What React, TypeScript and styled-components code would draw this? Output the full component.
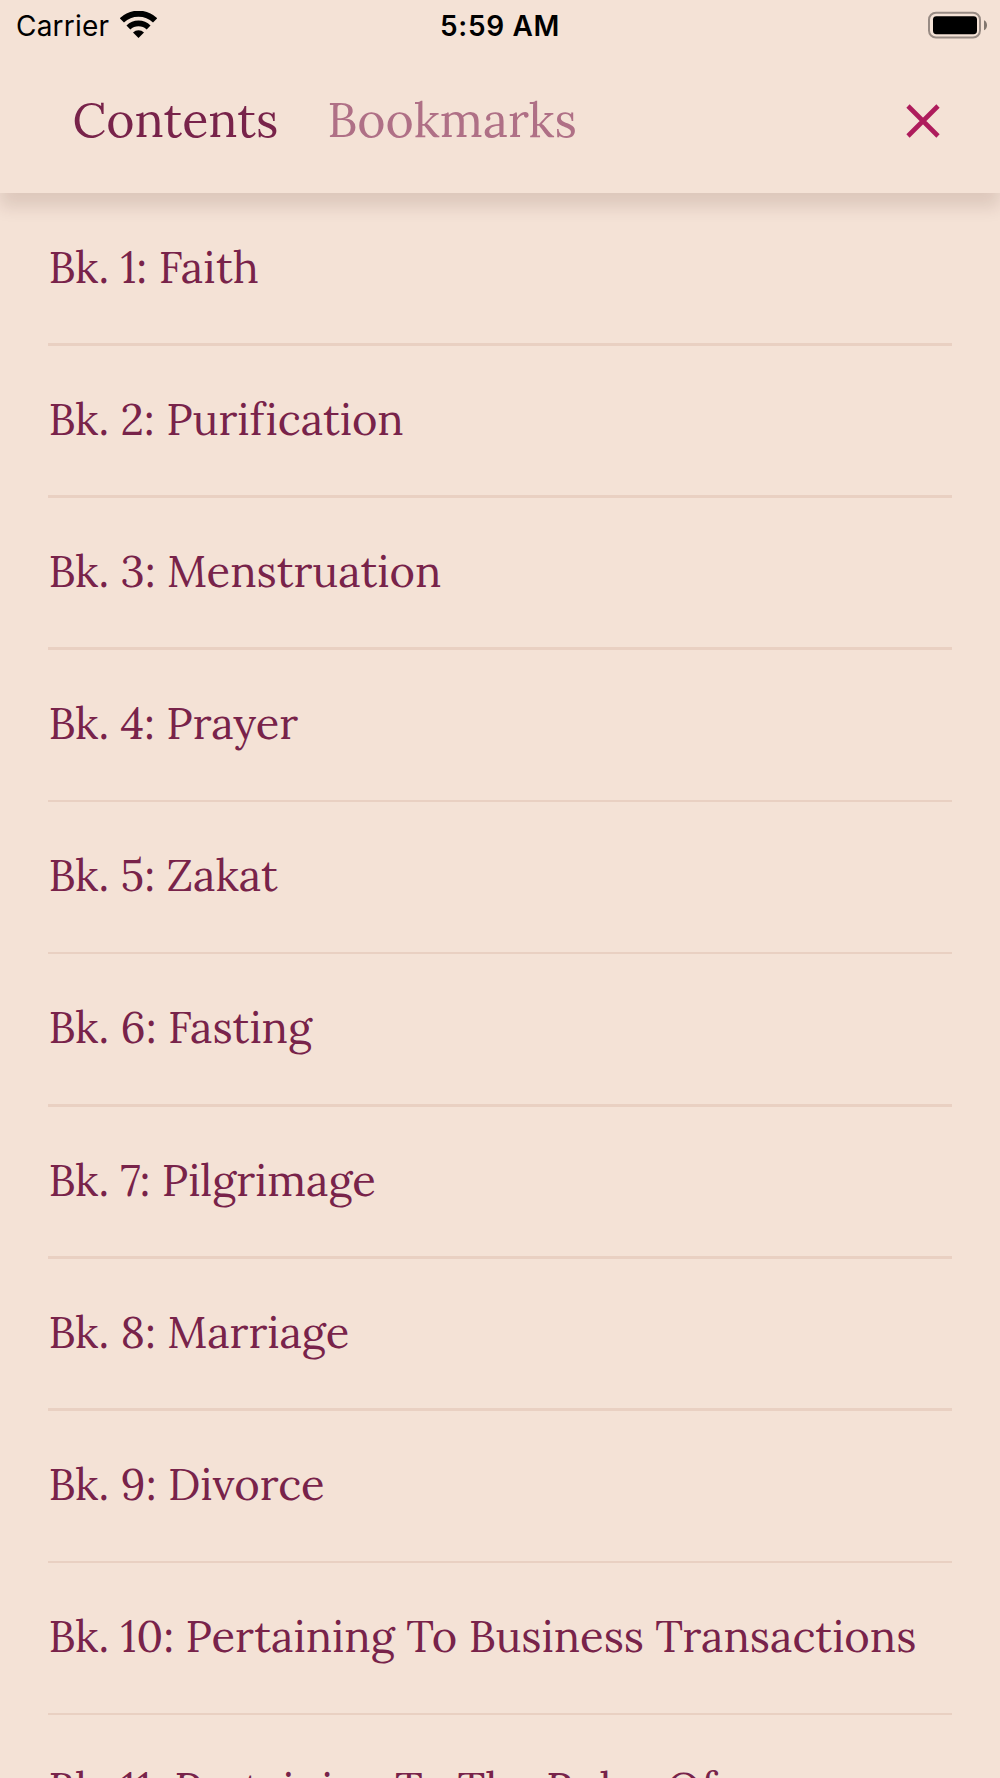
import React from "react";
import styled, { createGlobalStyle } from "styled-components";

const color = {
  paper: "#f4e2d6",
  ink: "#78234a",
  faded: "#af7086",
  accent: "#ae1c5c",
  rule: "#e9d0c2",
};

const GlobalStyle = createGlobalStyle`
  body {
    margin: 0;
    background: ${color.paper};
    overflow: hidden;
  }
`;

const Screen = styled.div`
  display: flex;
  flex-direction: column;
  width: 1000px;
  height: 1778px;
  overflow: hidden;
  background: ${color.paper};
  color: ${color.ink};
  font-family: Lora, "Liberation Serif", serif;
`;

const Header = styled.header`
  position: relative;
  z-index: 1;
  flex: none;
  height: 193px;
  background: ${color.paper};
  box-shadow: 0 14px 16px rgba(60, 20, 10, 0.12);
`;

const StatusBar = styled.div`
  display: grid;
  grid-template-columns: 1fr auto 1fr;
  align-items: center;
  height: 48px;
  padding: 0 13px 0 16px;
  color: #000;
  font: 400 28px/48px Inter, sans-serif;
`;

const Carrier = styled.div`
  display: flex;
  align-items: center;
  gap: 11px;
  letter-spacing: 0.2px;
`;

const Clock = styled.div`
  font-weight: 600;
  font-size: 28px;
  letter-spacing: 0.65px;
  padding: 2px 3px 0 0;
`;

const CarrierName = styled.span`
  padding-top: 2px;
`;

const Battery = styled.svg`
  justify-self: end;
`;

const TabBar = styled.nav`
  display: flex;
  align-items: center;
  gap: 49px;
  height: 145px;
  padding: 0 59px 0 72.6px;
`;

const Tab = styled.button<{ $active?: boolean }>`
  height: 145px;
  padding: 0 0 3px;
  border: 0;
  background: none;
  white-space: nowrap;
  font: 400 48.3px/60px Lora, "Liberation Serif", serif;
  color: ${(p) => (p.$active ? color.ink : color.faded)};
`;

const CloseButton = styled.button`
  display: flex;
  margin-left: auto;
  padding: 0;
  border: 0;
  background: none;
  color: ${color.accent};
`;

const List = styled.ul`
  flex: none;
  margin: 0;
  padding: 0.5px 48.4px 0;
  list-style: none;
`;

const Row = styled.li`
  display: flex;
  flex-direction: column;
  height: 152.2px;
`;

const Title = styled.span`
  flex: 1;
  font-size: 43.47px;
  line-height: 147px;
  font-variant-ligatures: none;
  white-space: nowrap;
`;

const Rule = styled.div`
  flex: none;
  height: 2.6px;
  background: ${color.rule};
`;

const books = [
  "Faith",
  "Purification",
  "Menstruation",
  "Prayer",
  "Zakat",
  "Fasting",
  "Pilgrimage",
  "Marriage",
  "Divorce",
  "Pertaining To Business Transactions",
  "Pertaining To The Rules Of",
];

const WifiIcon = () => (
  <svg width="37" height="28" viewBox="0 0 37 28" fill="none" stroke="#000">
    <path d="M1.9 9.4a23.8 23.8 0 0 1 33.2 0" strokeWidth="6" />
    <path d="M8.4 16.5a14.5 14.5 0 0 1 20.2 0" strokeWidth="5.6" />
    <path d="M18.5 27 13 21.4a8 8 0 0 1 11 0z" fill="#000" stroke="none" />
  </svg>
);

const BatteryIcon = () => (
  <Battery width="60" height="28" viewBox="0 0 60 28">
    <rect x="2" y="1.7" width="51" height="24.8" rx="7" fill="none" stroke="#988b84" strokeWidth="2" />
    <rect x="6" y="5.2" width="44" height="18" rx="3.4" fill="#000" />
    <path d="M57 9.3c4 1.8 4 8.2 0 10z" fill="#82776f" />
  </Battery>
);

export default function App() {
  return (
    <>
      <GlobalStyle />
      <Screen>
        <Header>
          <StatusBar>
            <Carrier>
              <CarrierName>Carrier</CarrierName>
              <WifiIcon />
            </Carrier>
            <Clock>5:59 AM</Clock>
            <BatteryIcon />
          </StatusBar>
          <TabBar>
            <Tab $active>Contents</Tab>
            <Tab>Bookmarks</Tab>
            <CloseButton aria-label="Close">
              <svg width="35" height="34" viewBox="0 0 35 34" stroke="currentColor" strokeWidth="4.6">
                <path d="M2 2l30 30M32 2L2 32" />
              </svg>
            </CloseButton>
          </TabBar>
        </Header>
        <List>
          {books.map((title, i) => (
            <Row key={title}>
              <Title>{`Bk. ${i + 1}: ${title}`}</Title>
              <Rule />
            </Row>
          ))}
        </List>
      </Screen>
    </>
  );
}
